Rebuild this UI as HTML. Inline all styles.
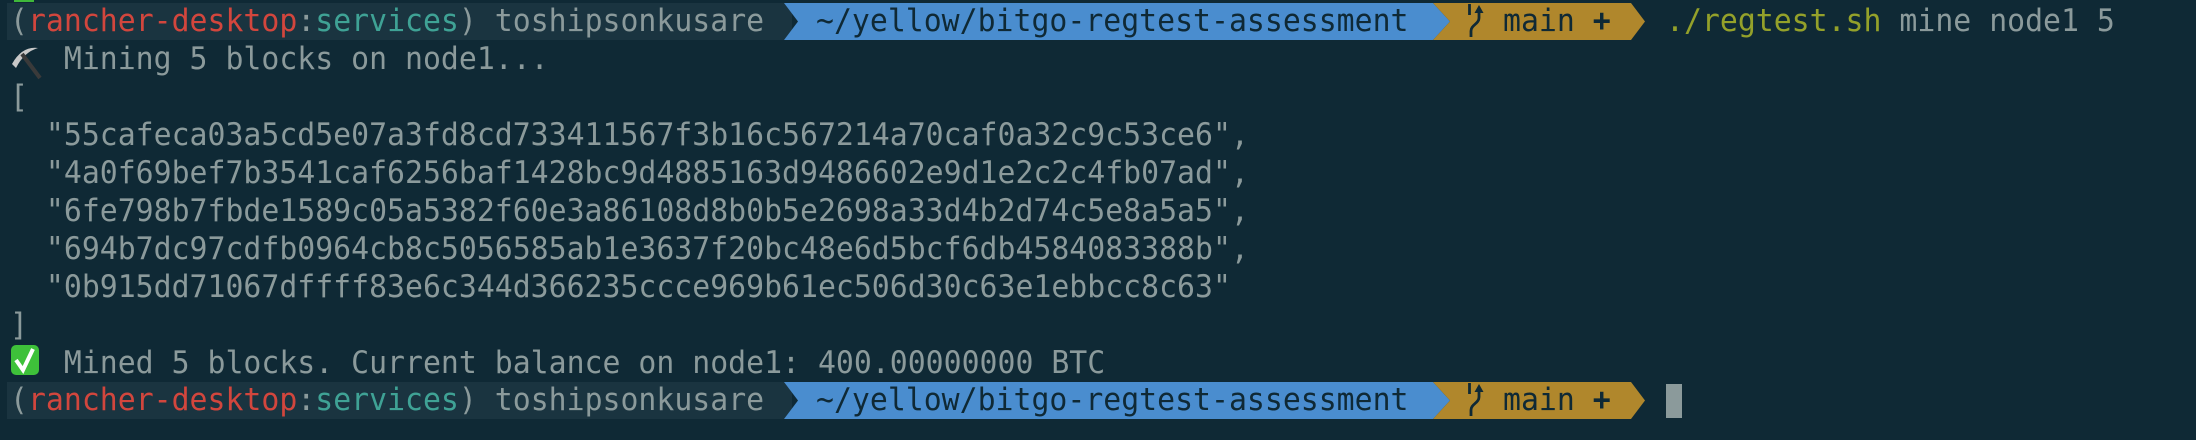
<!DOCTYPE html>
<html><head><meta charset="utf-8"><style>
html,body{margin:0;padding:0;width:2196px;height:440px;overflow:hidden;background:#0f2935;}
.l{position:absolute;left:10px;height:38px;line-height:38px;font-family:"DejaVu Sans Mono","Liberation Mono",monospace;font-size:31px;color:#8b9a9b;white-space:pre;transform:scaleX(0.962);transform-origin:0 50%;}
.bar{position:absolute;left:7px;width:785px;height:37px;background:#1a3440;}
.r{color:#d2463d}.c{color:#3fa295}.y{color:#94a12a}
</style></head><body>
<div style="position:absolute;left:14px;top:0;width:20px;height:2px;background:#3fb83a"></div>

<div class="bar" style="top:3px"></div>
<div class="bar" style="top:382px"></div>

<svg style="position:absolute;left:0;top:0" width="2196" height="440">
 <polygon points="784,3 1433,3 1450,21.5 1433,40 784,40 798,21.5" fill="#4a8dcf"/>
 <polygon points="1433,3 1631,3 1645,21.5 1631,40 1433,40 1450,21.5" fill="#b0872c"/>
 <polygon points="784,382 1433,382 1450,400.5 1433,419 784,419 798,400.5" fill="#4a8dcf"/>
 <polygon points="1433,382 1631,382 1645,400.5 1631,419 1433,419 1450,400.5" fill="#b0872c"/>
 <g stroke="#0f2935" stroke-width="2.8" fill="none">
  <path d="M1469.5 4v11M1479 12v6c0 6-8 7-8 13v6"/>
  <path d="M1469.5 383v11M1479 391v6c0 6-8 7-8 13v6"/>
 </g>
 <polygon points="1479,5 1474.5,13 1483.5,13" fill="#0f2935"/>
 <polygon points="1479,384 1474.5,392 1483.5,392" fill="#0f2935"/>
 <g transform="translate(10,44)">
  <path d="M2 20 Q12 2 28 4 Q14 8 6 24 Z" fill="#c8c8c8"/>
  <path d="M12 10 L30 34" stroke="#3a3a3a" stroke-width="4"/>
 </g>
 <rect x="11" y="345" width="28" height="30" rx="5" fill="#3ec13a"/>
 <path d="M16 360 L23 370 L33 349" stroke="#fff" stroke-width="4" fill="none"/>
</svg>

<div class="l" style="top:2px">(<span class="r">rancher-desktop</span>:<span class="c">services</span>) toshipsonkusare</div>
<div class="l" style="top:2px;left:816px;color:#0f2935">~/yellow/bitgo-regtest-assessment</div>
<div class="l" style="top:2px;left:1503px;color:#0f2935">main <b>+</b></div>
<div class="l y" style="top:2px;left:1666px">./regtest.sh <span style="color:#8b9a9b">mine node1 5</span></div>

<div class="l" style="top:40px">   Mining 5 blocks on node1...</div>
<div class="l" style="top:78px">[</div>
<div class="l" style="top:116px">  "55cafeca03a5cd5e07a3fd8cd733411567f3b16c567214a70caf0a32c9c53ce6",</div>
<div class="l" style="top:154px">  "4a0f69bef7b3541caf6256baf1428bc9d4885163d9486602e9d1e2c2c4fb07ad",</div>
<div class="l" style="top:192px">  "6fe798b7fbde1589c05a5382f60e3a86108d8b0b5e2698a33d4b2d74c5e8a5a5",</div>
<div class="l" style="top:230px">  "694b7dc97cdfb0964cb8c5056585ab1e3637f20bc48e6d5bcf6db4584083388b",</div>
<div class="l" style="top:268px">  "0b915dd71067dffff83e6c344d366235ccce969b61ec506d30c63e1ebbcc8c63"</div>
<div class="l" style="top:306px">]</div>
<div class="l" style="top:344px">   Mined 5 blocks. Current balance on node1: 400.00000000 BTC</div>

<div class="l" style="top:381px">(<span class="r">rancher-desktop</span>:<span class="c">services</span>) toshipsonkusare</div>
<div class="l" style="top:381px;left:816px;color:#0f2935">~/yellow/bitgo-regtest-assessment</div>
<div class="l" style="top:381px;left:1503px;color:#0f2935">main <b>+</b></div>
<div style="position:absolute;left:1666px;top:384px;width:16px;height:34px;background:#8b9a9b"></div>
</body></html>
